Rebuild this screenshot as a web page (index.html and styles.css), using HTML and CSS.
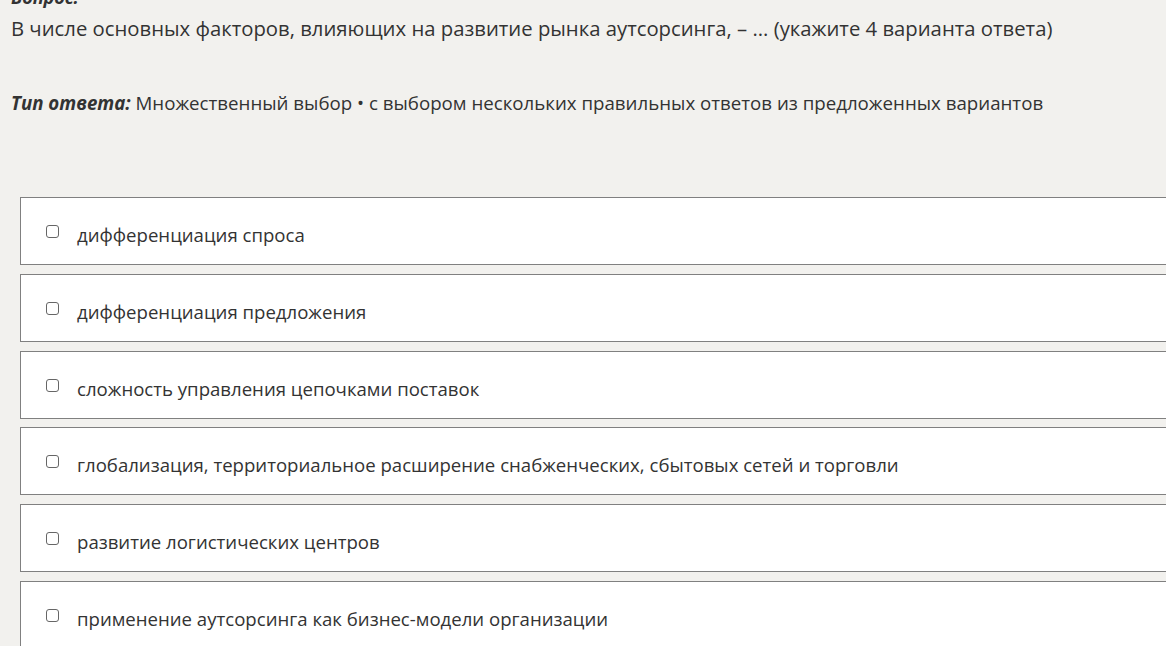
FILE: index.html
```html
<!DOCTYPE html>
<html lang="ru">
<head>
    <meta charset="UTF-8">
    <meta name="viewport" content="width=device-width, initial-scale=1.0">
    <title>Вопрос</title>
    <link rel="stylesheet" href="styles.css">
</head>
<body>
    <div class="question">
        <div class="label">Вопрос:</div>
        <div class="text">В числе основных факторов, влияющих на развитие рынка аутсорсинга, – ... (укажите 4 варианта ответа)</div>
        <div class="type"><b>Тип ответа:</b> Множественный выбор • с выбором нескольких правильных ответов из предложенных вариантов</div>
    </div>
    <div class="options">
        <label class="option"><input type="checkbox"><span>дифференциация спроса</span></label>
        <label class="option"><input type="checkbox"><span>дифференциация предложения</span></label>
        <label class="option"><input type="checkbox"><span>сложность управления цепочками поставок</span></label>
        <label class="option"><input type="checkbox"><span>глобализация, территориальное расширение снабженческих, сбытовых сетей и торговли</span></label>
        <label class="option"><input type="checkbox"><span>развитие логистических центров</span></label>
        <label class="option"><input type="checkbox"><span>применение аутсорсинга как бизнес-модели организации</span></label>
    </div>
</body>
</html>
```

FILE: styles.css
```css
body {
    font-family: 'Open Sans', 'Noto Sans', sans-serif;
    background-color: #f2f1ee;
    color: #333;
    margin: 0;
    overflow: hidden;
}

.question {
    padding-left: 11px;
}

.label {
    font-weight: bold;
    font-style: italic;
    font-size: 18px;
    line-height: 22px;
    margin-top: -14px;
}

.text {
    font-size: 20.3px;
    line-height: 28px;
    margin-top: 6px;
}

.type {
    font-size: 18.7px;
    line-height: 24px;
    margin-top: 49px;
}

.type b {
    font-style: italic;
}

.options {
    display: flex;
    flex-direction: column;
    gap: 8.8px;
    margin-top: 82px;
    margin-left: 20px;
    width: 1200px;
}

.option {
    display: flex;
    align-items: center;
    box-sizing: border-box;
    height: 68px;
    padding-top: 7px;
    background-color: #fff;
    border: 1px solid #808080;
    font-size: 18.6px;
    cursor: pointer;
}

.option input {
    appearance: none;
    box-sizing: border-box;
    width: 13px;
    height: 13px;
    border: 1px solid #666;
    border-radius: 3px;
    background-color: #fff;
    margin: 0 18px 6px 25px;
}

.option input:checked {
    background-color: #0067c0;
    border-color: #0067c0;
}
```
